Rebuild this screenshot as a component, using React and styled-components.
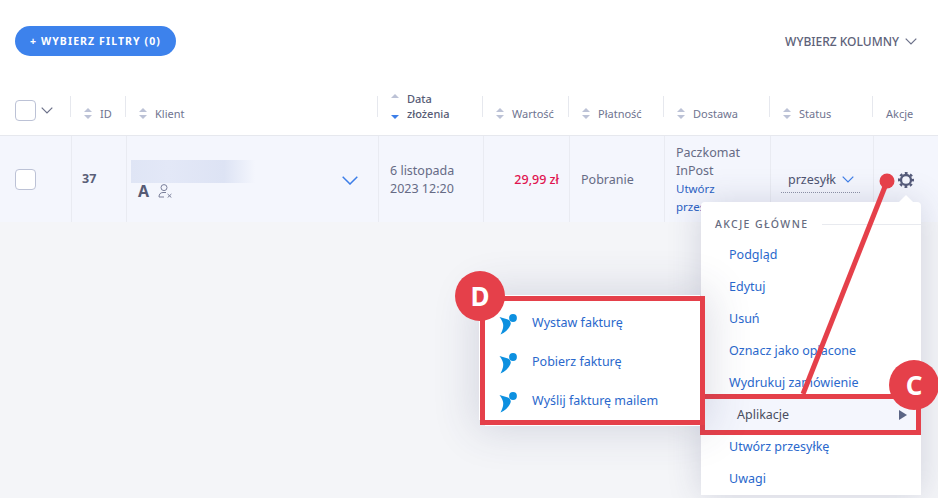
import styled, { createGlobalStyle, css } from 'styled-components';

const GlobalStyle = createGlobalStyle`
  html, body {
    margin: 0;
    padding: 0;
    background: #fff;
  }
  body {
    font-family: 'Noto Sans', 'Open Sans', sans-serif;
    color: #666b85;
  }
`;

const columns = css`
  display: grid;
  grid-template-columns: 71px 55px 252px 105px 86px 95px 106px 103px 65px;
`;

const Page = styled.div`
  position: relative;
  width: 938px;
  height: 498px;
  overflow: hidden;
  background: #f4f5f8;
`;

const Top = styled.div`
  background: #fff;
`;

const Toolbar = styled.div`
  display: flex;
  align-items: center;
  justify-content: space-between;
  height: 60px;
  padding: 26px 21px 0 15px;
  box-sizing: content-box;
`;

const FilterButton = styled.button`
  width: 161px;
  height: 30px;
  margin-top: -30px;
  border: 0;
  border-radius: 15px;
  background: #3d82ec;
  color: #fff;
  font: 700 10.5px 'Noto Sans', sans-serif;
  letter-spacing: 1.1px;
`;

const ColumnPicker = styled.div`
  display: flex;
  align-items: center;
  gap: 6px;
  margin-top: -30px;
  font-size: 12px;
  font-weight: 500;
  color: #5d6279;
`;

const Chevron = styled.svg`
  display: block;
  flex: none;
  fill: none;
  stroke: ${({ $color }) => $color || '#6b7089'};
  stroke-width: ${({ $weight }) => $weight || 1.2};
`;

const HeaderRow = styled.div`
  ${columns}
  height: 50px;
  border-bottom: 1px solid #e6e8ee;
  box-sizing: border-box;
`;

const HeaderCell = styled.div`
  position: relative;
  display: flex;
  align-items: flex-end;
  gap: 8px;
  padding: 0 0 14px ${({ $pad }) => $pad || 13}px;
  font-size: 11px;
  font-weight: ${({ $strong }) => ($strong ? 500 : 400)};
  line-height: 15px;
  color: ${({ $strong }) => ($strong ? '#565b75' : '#6f7490')};

  &::before {
    content: '';
    position: absolute;
    left: -1px;
    top: 10px;
    height: 21px;
    width: 1px;
    background: ${({ $first }) => ($first ? 'transparent' : '#e6e8ee')};
  }
`;

const SelectCell = styled(HeaderCell)`
  align-items: center;
  gap: 5px;
  padding: 14px 0 14px 15px;
`;

const HeadLabel = styled.span`
  max-width: 56px;
`;

const Box = styled.span`
  display: block;
  flex: none;
  width: 21px;
  height: 21px;
  box-sizing: border-box;
  border: 1px solid #bcc2d6;
  border-radius: 4px;
  background: #fff;
`;

const Sort = styled.span`
  display: flex;
  flex: none;
  flex-direction: column;
  justify-content: space-between;
  align-items: center;
  width: 8px;
  height: ${({ $tall }) => ($tall ? 25 : 11)}px;
  margin-bottom: 2px;

  &::before,
  &::after {
    content: '';
    border-left: 4px solid transparent;
    border-right: 4px solid transparent;
  }
  &::before {
    border-bottom: 4px solid #bcc2d6;
  }
  &::after {
    border-top: 4px solid ${({ $active }) => ($active ? '#3d7ee8' : '#bcc2d6')};
  }
`;

const Row = styled.div`
  ${columns}
  height: 86px;
  background: #f4f6fd;
  font-size: 12.5px;
  line-height: 18px;
`;

const Cell = styled.div`
  position: relative;
  display: flex;
  flex-direction: column;
  justify-content: center;
  min-width: 0;
  padding: ${({ $nudge }) => ($nudge ? 2 : 0)}px ${({ $right }) => $right || 0}px 0 ${({ $left }) => $left || 0}px;
  border-left: ${({ $first }) => ($first ? 0 : '1px solid #e9ebf2')};
`;

const IdValue = styled.b`
  font-size: 12.5px;
  font-weight: 700;
  color: #5a5f78;
`;

const ClientCell = styled(Cell)`
  flex-direction: row;
  justify-content: space-between;
  align-items: center;
  padding: 0 20px 0 4px;
`;

const ClientToggle = styled.span`
  display: block;
  margin-top: 2px;
`;

const BlurredName = styled.div`
  width: 124px;
  height: 23px;
  background: linear-gradient(90deg, #dfe5f5 0%, #e3e8f7 30%, #dde3f4 75%, #f4f6fd 100%);
`;

const ClientMeta = styled.div`
  display: flex;
  align-items: center;
  gap: 9px;
  height: 15px;
  padding-left: 7px;
  color: #565b75;
  font-size: 16px;
  font-weight: 700;
`;

const Price = styled.div`
  text-align: right;
  font-weight: 500;
  font-size: 12.5px;
  color: #e0134f;
`;

const ShipLink = styled.a`
  display: block;
  font-size: 11.5px;
  color: #2a62c4;
`;

const StatusSelect = styled.div`
  display: flex;
  align-items: center;
  justify-content: space-between;
  width: 79px;
  height: 26px;
  padding: 0 6px 0 7px;
  box-sizing: border-box;
  overflow: hidden;
  white-space: nowrap;
  color: #4f5470;
  border-bottom: 1px dotted #8f94a8;
`;

const GearCell = styled(Cell)`
  align-items: flex-end;
  padding-right: 23px;
`;

const Menu = styled.div`
  position: absolute;
  left: 701px;
  top: 202px;
  width: 220px;
  padding-top: 15px;
  border-radius: 4px 4px 0 0;
  background: #fff;
  box-shadow: 0 0 34px rgba(50, 58, 100, 0.18);

  &::before {
    content: '';
    position: absolute;
    right: 8px;
    top: -7px;
    border-left: 7px solid transparent;
    border-right: 7px solid transparent;
    border-bottom: 7px solid #fff;
  }
`;

const MenuHeading = styled.div`
  display: flex;
  align-items: center;
  gap: 14px;
  height: 16px;
  margin: -1px 0 7px 14px;
  white-space: nowrap;
  font-size: 10.5px;
  font-weight: 500;
  letter-spacing: 1.4px;
  color: #666b80;

  &::after {
    content: '';
    flex: 1;
    height: 1px;
    background: #e8eaef;
  }
`;

const MenuItem = styled.div`
  height: 32px;
  padding-left: 28px;
  font-size: 12.5px;
  line-height: 32px;
  color: #2a68cc;
`;

const ActiveItem = styled(MenuItem)`
  position: relative;
  display: flex;
  align-items: center;
  justify-content: space-between;
  height: 31px;
  line-height: 31px;
  margin: 0 5px 1px 4px;
  padding: 0 9px 0 32px;
  background: #f4f6fd;
  color: #4a4e60;
  outline: 5px solid #e5404a;
`;

const ArrowRight = styled.span`
  border-top: 5px solid transparent;
  border-bottom: 5px solid transparent;
  border-left: 8px solid #5b6585;
`;

const Submenu = styled.div`
  position: absolute;
  right: 100%;
  margin-right: 5px;
  top: -98px;
  width: 215px;
  padding: 2px 0 0;
  background: #fff;
  outline: 5px solid #e5404a;
  box-shadow: 0 -6px 0 #fff, 0 6px 0 #fff, -6px 0 0 #fff, 0 0 40px 10px rgba(50, 58, 100, 0.16);
`;

const SubItem = styled.div`
  display: flex;
  align-items: center;
  gap: 15px;
  height: 39px;
  padding-left: 14px;
  font-size: 12.5px;
  color: #2a68cc;
`;

const BirdIcon = styled.svg`
  flex: none;
  margin-top: 2px;
`;

const Marker = styled.div`
  position: absolute;
  display: flex;
  align-items: center;
  justify-content: center;
  width: 50px;
  height: 50px;
  border-radius: 50%;
  background: #e5404a;
  color: #fff;
  font: 700 26px/1 'Noto Sans', sans-serif;
  ${({ $corner }) =>
    $corner === 'c'
      ? css`
          right: -23px;
          top: -39px;
        `
      : css`
          left: -30px;
          top: -30px;
        `}
`;

const Annotation = styled.svg`
  position: absolute;
  left: 0;
  top: 0;
  pointer-events: none;
`;

function Down({ w = 12, h = 7, color, weight }) {
  return (
    <Chevron width={w} height={h} viewBox={`0 0 ${w} ${h}`} $color={color} $weight={weight}>
      <polyline points={`0.7,0.7 ${w / 2},${h - 1} ${w - 0.7},0.7`} />
    </Chevron>
  );
}

function Gear() {
  return (
    <svg width="18" height="18" viewBox="0 0 18 18" fill="none" stroke="#555b7a">
      <circle cx="9" cy="9" r="5" strokeWidth="2.3" />
      <circle cx="9" cy="9" r="6.9" strokeWidth="2.2" strokeDasharray="2.8 2.62" strokeDashoffset="1.4" />
    </svg>
  );
}

function AppBird() {
  return (
    <BirdIcon width="18" height="22" viewBox="0 0 18 22">
      <circle cx="14" cy="5" r="3.9" fill="#0d90e0" />
      <path d="M0.5 4 L9 6.4 C10.5 7 11.6 8.5 11.8 10.6 C11 15 6.5 19.4 1.5 21.5 C3.5 17.5 5 13.5 3.8 10 C3.2 8 2 6 0.5 4 Z" fill="#0d90e0" />
    </BirdIcon>
  );
}

function UserOff() {
  return (
    <svg width="15" height="14" viewBox="0 0 15 14" fill="none" stroke="#7a7f9a" strokeWidth="1">
      <circle cx="6" cy="3.6" r="3" />
      <path d="M1 13 C1 10 2.5 8.6 5 8.5 L8 8.5" />
      <path d="M1 13 L6 13 M9.6 10 L13.4 13.6 M13.4 10 L9.6 13.6" />
    </svg>
  );
}

const heads = [
  { label: 'ID' },
  { label: 'Klient' },
  { label: 'Data złożenia', sort: true },
  { label: 'Wartość' },
  { label: 'Płatność' },
  { label: 'Dostawa' },
  { label: 'Status' },
];

const menuTop = ['Podgląd', 'Edytuj', 'Usuń', 'Oznacz jako opłacone', 'Wydrukuj zamówienie'];
const invoices = ['Wystaw fakturę', 'Pobierz fakturę', 'Wyślij fakturę mailem'];

export default function App() {
  return (
    <Page>
      <GlobalStyle />
      <Top>
        <Toolbar>
          <FilterButton>+ WYBIERZ FILTRY (0)</FilterButton>
          <ColumnPicker>
            WYBIERZ KOLUMNY <Down />
          </ColumnPicker>
        </Toolbar>
        <HeaderRow>
          <SelectCell $first>
            <Box />
            <Down />
          </SelectCell>
          {heads.map((h) => (
            <HeaderCell key={h.label} $strong={h.sort}>
              <Sort $tall={h.sort} $active={h.sort} />
              <HeadLabel>{h.label}</HeadLabel>
            </HeaderCell>
          ))}
          <HeaderCell>Akcje</HeaderCell>
        </HeaderRow>
      </Top>

      <Row>
        <Cell $first $left={15}>
          <Box />
        </Cell>
        <Cell $left={10}>
          <IdValue>37</IdValue>
        </Cell>
        <ClientCell>
          <div>
            <BlurredName />
            <ClientMeta>
              A <UserOff />
            </ClientMeta>
          </div>
          <ClientToggle>
            <Down w={16} h={9} color="#3d7ee8" weight={1.5} />
          </ClientToggle>
        </ClientCell>
        <Cell $nudge $left={11}>
          <div>6 listopada</div>
          <div>2023 12:20</div>
        </Cell>
        <Cell $nudge $right={10}>
          <Price>29,99 zł</Price>
        </Cell>
        <Cell $nudge $left={11}>Pobranie</Cell>
        <Cell $nudge $left={11}>
          <div>Paczkomat</div>
          <div>InPost</div>
          <ShipLink>Utwórz</ShipLink>
          <ShipLink>przesyłkę</ShipLink>
        </Cell>
        <Cell $nudge $left={10}>
          <StatusSelect>
            przesyłk
            <Down w={12} h={7} color="#3d7ee8" />
          </StatusSelect>
        </Cell>
        <GearCell $nudge>
          <Gear />
        </GearCell>
      </Row>

      <Menu>
        <MenuHeading>AKCJE GŁÓWNE</MenuHeading>
        {menuTop.map((label) => (
          <MenuItem key={label}>{label}</MenuItem>
        ))}
        <ActiveItem>
          Aplikacje
          <ArrowRight />
          <Submenu>
            {invoices.map((label) => (
              <SubItem key={label}>
                <AppBird />
                {label}
              </SubItem>
            ))}
            <Marker>D</Marker>
          </Submenu>
          <Marker $corner="c">C</Marker>
        </ActiveItem>
        <MenuItem>Utwórz przesyłkę</MenuItem>
        <MenuItem>Uwagi</MenuItem>
      </Menu>

      <Annotation width="938" height="498" viewBox="0 0 938 498">
        <line x1="886" y1="184" x2="803" y2="394" stroke="#e5404a" strokeWidth="5" />
        <circle cx="887" cy="181" r="7.5" fill="#e5404a" />
      </Annotation>
    </Page>
  );
}
